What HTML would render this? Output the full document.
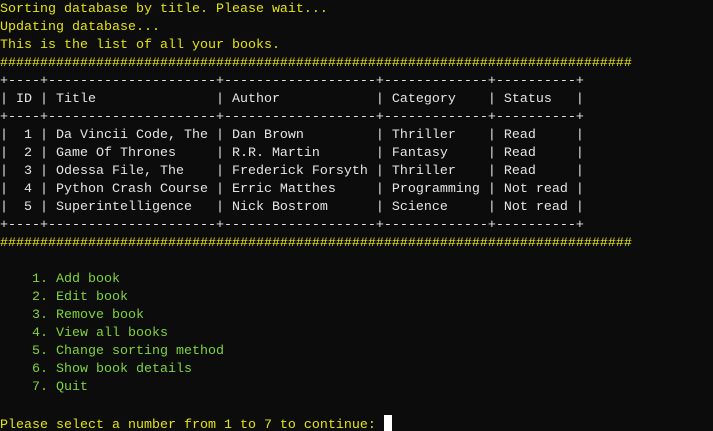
<!DOCTYPE html>
<html><head><meta charset="utf-8"><style>
html,body{margin:0;padding:0;background:#0c0c0c;width:713px;height:431px;overflow:hidden}
pre{margin:0;padding-top:1px;font-family:"Liberation Mono",monospace;font-size:13.33px;line-height:18px;color:#e5e5e5;white-space:pre}
.y{color:#e5e510}.g{color:#7fd43a}.w{color:#e5e5e5}
.cur{display:inline-block;width:8px;height:16px;background:#fff;vertical-align:-3px}
</style></head><body><pre><span class="y">Sorting database by title. Please wait...
Updating database...
This is the list of all your books.
###############################################################################</span>
<span class="w">+----+---------------------+-------------------+-------------+----------+
| ID | Title               | Author            | Category    | Status   |
+----+---------------------+-------------------+-------------+----------+
|  1 | Da Vincii Code, The | Dan Brown         | Thriller    | Read     |
|  2 | Game Of Thrones     | R.R. Martin       | Fantasy     | Read     |
|  3 | Odessa File, The    | Frederick Forsyth | Thriller    | Read     |
|  4 | Python Crash Course | Erric Matthes     | Programming | Not read |
|  5 | Superintelligence   | Nick Bostrom      | Science     | Not read |
+----+---------------------+-------------------+-------------+----------+</span>
<span class="y">###############################################################################</span>

<span class="g">    1. Add book
    2. Edit book
    3. Remove book
    4. View all books
    5. Change sorting method
    6. Show book details
    7. Quit</span>

<span class="y">Please select a number from 1 to 7 to continue: </span><span class="cur"></span></pre></body></html>
